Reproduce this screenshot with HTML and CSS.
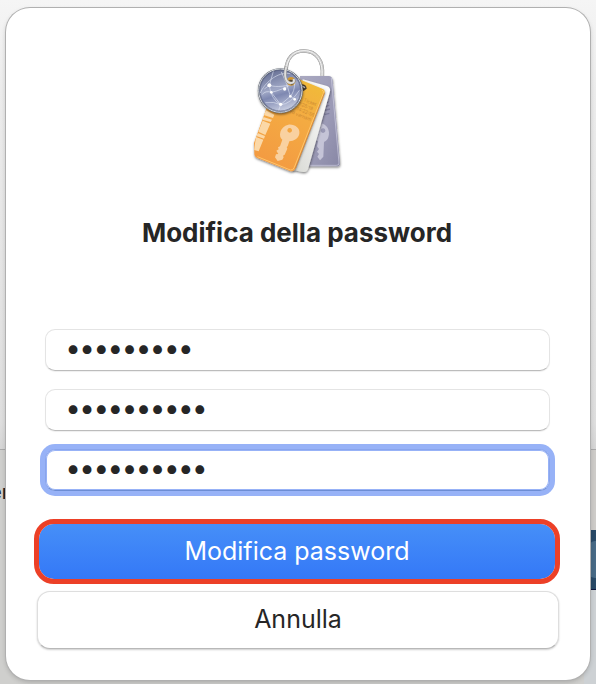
FILE: index.html
```html
<!DOCTYPE html>
<html lang="it">
<head>
<meta charset="utf-8">
<meta name="viewport" content="width=device-width, initial-scale=1">
<title>Modifica della password</title>
<link rel="stylesheet" href="styles.css">
</head>
<body>
<div class="backdrop" aria-hidden="true">
  <div class="backdrop-top"></div>
  <div class="backdrop-bottom">
    <span class="backdrop-text">er</span>
    <div class="backdrop-side"><div class="backdrop-gap"></div><div class="backdrop-bar"><i></i></div><div class="backdrop-rest"></div></div>
  </div>
</div>
<main class="dialog">
  <svg class="icon" viewBox="0 0 345 420" aria-hidden="true">
    <defs>
      <linearGradient id="orange" x1=".7" y1="0" x2=".3" y2="1"><stop offset="0" stop-color="#f0bb38"/><stop offset=".4" stop-color="#f4ab43"/><stop offset="1" stop-color="#f39a43"/></linearGradient>
      <linearGradient id="purple" x1="0" y1="0" x2="1" y2="1"><stop offset="0" stop-color="#aaa9c1"/><stop offset=".6" stop-color="#9a99b5"/><stop offset="1" stop-color="#8887a5"/></linearGradient>
      <linearGradient id="white" x1="1" y1="0" x2="0" y2="1"><stop offset="0" stop-color="#fff"/><stop offset="1" stop-color="#d8d9d4"/></linearGradient>
      <linearGradient id="globe" x1=".3" y1="0" x2=".6" y2="1"><stop offset="0" stop-color="#626b90"/><stop offset=".45" stop-color="#a0a8c6"/><stop offset=".6" stop-color="#7e88b1"/><stop offset="1" stop-color="#d0d5e6"/></linearGradient>
      <filter id="shade" x="-20%" y="-20%" width="140%" height="140%"><feDropShadow dx="1" dy="4" stdDeviation="3" flood-opacity=".5"/></filter>
      <clipPath id="orange-clip"><path d="M92 170L145 104L247 146Q257 150 253 160L166 385Q162 397 150 393L52 354Q43 350 43 341L42 309Z"/></clipPath>
    </defs>
    <path d="M138 91C140 54 160 33 192 33C229 33 251 62 247 108" fill="none" stroke="#888" stroke-width="11"/>
    <path d="M138 91C140 54 160 33 192 33C229 33 251 62 247 108" fill="none" stroke="#c7c7c7" stroke-width="9"/>
    <path d="M138 91C141 54 160 32 192 32C228 32 250 62 246 108" fill="none" stroke="#f5f5f5" stroke-width="3"/>
    <g filter="url(#shade)">
      <path d="M180 108H266Q276 108 278 120L300 368Q301 379 290 379H190Z" fill="url(#purple)"/>
      <path d="M274 114L297 369Q298 376 289 376H210" fill="none" stroke="#d0d0e2" stroke-width="2"/>
    </g>
    <path fill-rule="evenodd" d="M238 250C261 250 272 272 265 292C263 300 257 303 252 306L250 350L240 361L232 350L237 342L231 335L237 327L231 319L234 304C212 290 216 254 238 250ZM249 265a7 7 0 1 0 .1 0Z" fill="#c5c4d7"/>
    <path d="M252 189l14-4m-12 15l14-4m-13 15l15-4m-17 17l15-4" stroke="#7e7d9d" stroke-width="4"/>
    <path d="M188 118L261 138Q274 143 269 158L205 385Q201 397 190 396L156 389Z" fill="url(#white)" filter="url(#shade)"/>
    <path d="M92 170L145 104L247 146Q257 150 253 160L166 385Q162 397 150 393L52 354Q43 350 43 341L42 309Z" fill="url(#orange)" filter="url(#shade)"/>
    <path d="M246 150Q252 153 250 160L163 382Q160 392 151 390L52 350" fill="none" stroke="#ffc56b" stroke-width="3"/>
    <path d="M254 158L166 386" stroke="#cf761f" stroke-width="2"/>
    <g clip-path="url(#orange-clip)" fill="#fbd8a7">
      <path d="M78 211L103 224L99 234L71 225ZM70 231L96 239L92 246L67 239ZM68 242L91 251L76 285L55 275ZM53 279L75 288L72 296L49 288ZM48 291L70 299L56 334L42 330Z"/>
    </g>
    <path fill-rule="evenodd" d="M145 254C165 252 181 265 178 281C175 296 162 302 148 304L143 319L140 321L142 326L134 344L129 347L131 352L127 359L113 363L105 352L108 343L115 342L109 332L116 328L114 322L120 319L127 299C114 290 119 259 145 254ZM149 264a7 7 0 1 0 .1 0Z" fill="#f9d1a0"/>
    <g class="ticket-text" transform="rotate(22 176 180)"><text x="190" y="178">Ticket</text><text x="180" y="194">1:28:19</text><text x="180" y="210">14:22:58</text><text x="166" y="226">rd varnam</text></g>
    <path d="M183 133Q199 132 200 146L190 154" fill="#42382b"/>
    <path d="M186 138L195 143" stroke="#bbb" stroke-width="4"/>
    <circle cx="121" cy="152" r="65" fill="url(#globe)" stroke="#555b68" stroke-width="5" filter="url(#shade)"/>
    <circle cx="121" cy="152" r="65" fill="none" stroke="#d6dae0" stroke-width="3"/>
    <circle cx="121" cy="152" r="61" fill="none" stroke="#596080" stroke-width="2"/>
    <path d="M61 159C72 131 112 93 151 101M88 136C110 143 143 139 164 128M73 147L88 136L100 94M88 136Q93 178 122 194M94 157Q124 151 164 128M94 157L122 194L151 169Q142 129 124 96M122 194Q152 193 178 151M151 169L166 179M151 169Q164 155 164 128M76 188Q102 184 122 194L116 211M67 163Q77 151 94 157" fill="none" stroke="#e4e9f6" stroke-width="2" opacity=".85"/>
    <g fill="#fff"><circle cx="88" cy="136" r="6"/><circle cx="94" cy="157" r="4"/><circle cx="122" cy="193" r="5"/><circle cx="134" cy="147" r="5"/><circle cx="151" cy="169" r="4"/><circle cx="164" cy="178" r="4"/><circle cx="161" cy="130" r="4"/></g>
    <circle cx="153" cy="124" r="13" fill="#cf9835"/>
    <path d="M147 120Q160 117 164 128L155 136Z" fill="#57452b"/>
    <path d="M139 80C131 107 137 129 153 129Q165 129 161 117" fill="none" stroke="#888" stroke-width="9"/>
    <path d="M139 80C131 107 137 129 153 129Q165 129 161 117" fill="none" stroke="#dedede" stroke-width="6"/>
  </svg>
  <h1>Modifica della password</h1>
  <form>
    <div class="fields">
      <input type="password" value="123456789" aria-label="Vecchia password">
      <input type="password" value="1234567890" aria-label="Nuova password">
      <input class="focused" type="password" value="1234567890" aria-label="Verifica password">
    </div>
    <div class="actions">
      <button class="primary" type="button">Modifica password</button>
      <button class="secondary" type="button">Annulla</button>
    </div>
  </form>
</main>
</body>
</html>
```
FILE: styles.css
```css
* { box-sizing: border-box; }
body {
  margin: 0;
  min-height: 100vh;
  padding: 8px 6px 4px;
  display: flex;
  font-family: Inter, "Liberation Sans", sans-serif;
  color: #262626;
}
.backdrop {
  position: absolute;
  inset: 0;
  display: grid;
  grid-template-rows: 449px 1fr;
  overflow: hidden;
}
.backdrop-top { background: linear-gradient(#f5f5f5, #ececec 20%, #dedede 94%, #d5d5d5); }
.backdrop-bottom {
  display: flex;
  justify-content: space-between;
  border-top: 1px solid #a9a9a9;
  background: #cfcfcd;
}
.backdrop-text {
  width: 20px;
  margin: 30px 0 0 -10px;
  font-size: 20px;
  line-height: 24px;
  font-weight: 500;
}
.backdrop-side {
  width: 12px;
  display: grid;
  grid-template-rows: 80px 60px 1fr;
}
.backdrop-gap { background: #ceccc9; }
.backdrop-bar {
  padding: 11px 0;
  background: #294a67;
  border-bottom: 1px solid #101840;
}
.backdrop-bar i {
  display: block;
  height: 37px;
  margin-left: 5px;
  border-radius: 6px 0 0 6px;
  background: #486a86;
}
.backdrop-rest { background: #cdd1d4; }
.dialog {
  position: relative;
  flex: 1;
  padding: 32px 30px 30px 28px;
  border-radius: 24px;
  background: #fff;
  box-shadow: 0 0 0 1px #b0b0b0, 0 2px 5px #0003;
}
.icon {
  display: block;
  width: 115px;
  height: 140px;
  margin: 0 auto;
}
.ticket-text { font-size: 14px; fill: #cf8b32; }
h1 {
  margin: 37px 0 80px;
  font-size: 26px;
  line-height: 32px;
  font-weight: 700;
  text-align: center;
}
.fields {
  display: grid;
  gap: 18px;
  margin: 0 10px 0 11px;
}
input {
  width: 100%;
  height: 42px;
  padding: 0 20px 4px;
  border: 1px solid #e4e4e4;
  border-bottom-color: #bcbcbc;
  border-radius: 10px;
  outline: none;
  background: #fff;
  color: #262626;
  font-family: Inter, sans-serif;
  font-size: 28px;
  font-weight: 600;
  line-height: 32px;
  box-shadow: 0 1px 1px #0001;
}
input.focused {
  border-color: #89a5ec;
  border-bottom-color: #6d8dd4;
  box-shadow: 0 0 0 5px #97b2f7, inset 0 0 0 1px #97b2f7;
}
.actions {
  display: grid;
  gap: 7px;
  margin-top: 28px;
}
button {
  font-family: inherit;
  font-size: 25px;
  line-height: 32px;
  text-align: center;
}
.primary {
  padding: 0 0 2px;
  height: 65px;
  border: 5px solid #ec4027;
  border-radius: 20px;
  background: linear-gradient(#468ff8, #3478f7) padding-box;
  color: #fff;
}
.secondary {
  height: 58px;
  margin: 0 1px 0 3px;
  padding: 0 0 2px;
  border: 1px solid #dedede;
  border-bottom-color: #b8b8b8;
  border-radius: 13px;
  background: #fff;
  color: #262626;
  box-shadow: 0 1px 2px #0003;
}
```
